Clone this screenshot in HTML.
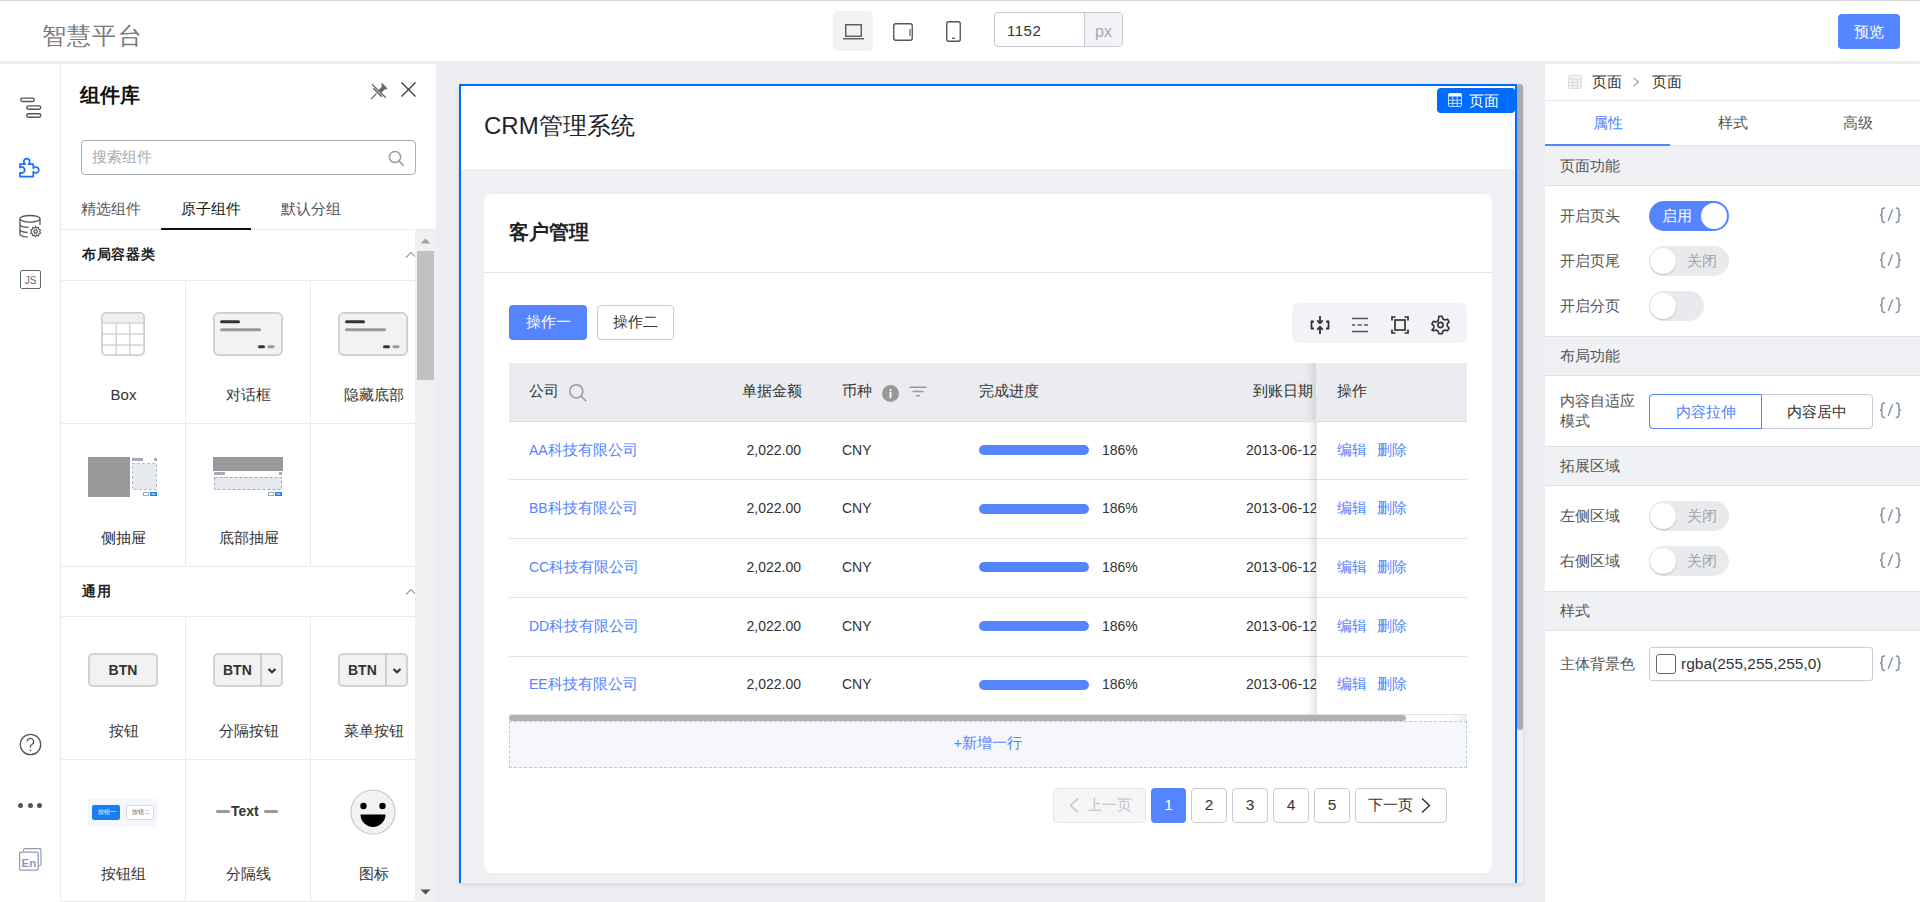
<!DOCTYPE html>
<html><head><meta charset="utf-8">
<style>
*{box-sizing:border-box;margin:0;padding:0}
html,body{width:1920px;height:902px;overflow:hidden;background:#fff;font-family:"Liberation Sans",sans-serif;font-size:15px;color:#333}
.a{position:absolute}
.l{font-size:14px}
svg{display:block}
#top{left:0;top:0;width:1920px;height:61px;background:#fff;border-top:1px solid #d8d9dc}
#strip{left:0;top:61px;width:1920px;height:3px;background:#eceef2}
#rail{left:0;top:64px;width:61px;height:838px;background:#fff;border-right:1px solid #e9eaef}
#panel{left:61px;top:64px;width:375px;height:838px;background:#fff}
#canvas{left:436px;top:64px;width:1109px;height:838px;background:#eceef2}
#right{left:1545px;top:64px;width:375px;height:838px;background:#fff}
</style></head><body>
<div id="top" class="a">
 <div class="a" style="left:42px;top:19px;font-size:24px;line-height:32px;color:#7a7a7a;letter-spacing:1.2px">智慧平台</div>
 <div class="a" style="left:833px;top:10px;width:40px;height:40px;border-radius:5px;background:#f2f2f2"></div>
 <svg class="a" style="left:840px;top:17px" width="26" height="26" viewBox="0 0 26 26"><rect x="5.75" y="6.75" width="15.5" height="11.5" fill="none" stroke="#555" stroke-width="1.35"/><line x1="3" y1="20.75" x2="24" y2="20.75" stroke="#555" stroke-width="1.35"/></svg>
 <svg class="a" style="left:890px;top:17px" width="26" height="26" viewBox="0 0 26 26"><rect x="3.75" y="5.75" width="18.5" height="16.5" rx="2" fill="none" stroke="#555" stroke-width="1.35"/><line x1="20" y1="11" x2="20" y2="18" stroke="#555" stroke-width="1.1"/></svg>
 <svg class="a" style="left:940px;top:17px" width="26" height="26" viewBox="0 0 26 26"><rect x="6.75" y="3.75" width="13.5" height="19.5" rx="2" fill="none" stroke="#555" stroke-width="1.35"/><line x1="12" y1="20.25" x2="15" y2="20.25" stroke="#555" stroke-width="1.35"/></svg>
 <div class="a" style="left:994px;top:11px;width:129px;height:35px;border:1px solid #c5c8d2;border-radius:4px;overflow:hidden">
  <div class="a l" style="left:12px;top:1px;line-height:33px;font-size:15px;color:#333;letter-spacing:0.5px">1152</div>
  <div class="a" style="left:89px;top:0;width:38px;height:33px;border-left:1px solid #c5c8d2;background:#f2f3f7;text-align:center;line-height:38px;font-size:16px;color:#a5a8b0">px</div>
 </div>
 <div class="a" style="left:1838px;top:13px;width:62px;height:35px;border-radius:4px;background:#5585ff;color:#fff;text-align:center;line-height:35px;font-size:15px">预览</div>
</div>

<div id="strip" class="a"></div>
<div id="rail" class="a">
 <svg class="a" style="left:18px;top:30px" width="26" height="26" viewBox="0 0 26 26" fill="none" stroke="#555" stroke-width="1.4"><rect x="2.7" y="4.1" width="13.6" height="3.4" rx="1.7"/><rect x="8.7" y="11.9" width="14" height="3.4" rx="1.7"/><rect x="8.7" y="19.8" width="14" height="3.4" rx="1.7"/></svg>
 <svg class="a" style="left:17px;top:92px" width="26" height="26" viewBox="0 0 26 26" fill="none" stroke="#1a6dff" stroke-width="1.7" stroke-linejoin="round"><path d="M3 8.1H8.14A3 3 0 1 1 11.46 8.1H16.3V12.34A3 3 0 1 1 16.3 15.66V20.6H3V16.5A3 3 0 1 0 3 11.5Z"/></svg>
 <svg class="a" style="left:17px;top:149px" width="26" height="26" viewBox="0 0 26 26" fill="none" stroke="#555" stroke-width="1.3"><ellipse cx="13" cy="5.8" rx="10" ry="3.3"/><path d="M3 5.8v15.2c0 1.5 3.2 2.8 7.8 3.2M3 11.2c0 1.6 3.6 3 8.6 3.2M3 16.4c0 1.5 3.1 2.8 7.6 3.1M23 5.8v6"/><circle cx="18.6" cy="18.6" r="1.7"/><path d="M18.6 13.4l1 1.6 1.8-.5.4 1.8 1.7.7-.9 1.6.9 1.6-1.7.7-.4 1.8-1.8-.5-1 1.6-1-1.6-1.8.5-.4-1.8-1.7-.7.9-1.6-.9-1.6 1.7-.7.4-1.8 1.8.5z" stroke-width="1.1"/></svg>
 <div class="a" style="left:20px;top:206px;width:21px;height:19px;border:1.6px solid #666;border-radius:2px;font-size:10px;line-height:19px;text-align:center;color:#666">JS</div>
 <svg class="a" style="left:18px;top:668px" width="25" height="25" viewBox="0 0 25 25" fill="none" stroke="#555" stroke-width="1.3"><circle cx="12.5" cy="12.5" r="10.2"/><path d="M9.3 9.6a3.2 3.2 0 1 1 4.6 2.9c-.9.5-1.4 1.1-1.4 2.1v1.2"/><circle cx="12.5" cy="18.3" r=".9" fill="#555" stroke="none"/></svg>
 <div class="a" style="left:18px;top:739px;width:5px;height:5px;border-radius:50%;background:#555"></div>
 <div class="a" style="left:27.5px;top:739px;width:5px;height:5px;border-radius:50%;background:#555"></div>
 <div class="a" style="left:37px;top:739px;width:5px;height:5px;border-radius:50%;background:#555"></div>
 <svg class="a" style="left:18px;top:783px" width="25" height="25" viewBox="0 0 25 25" fill="none" stroke="#8f9bb3" stroke-width="1.2"><path d="M5.5 4.2V3.2a1.5 1.5 0 0 1 1.5-1.5h14.5a1.5 1.5 0 0 1 1.5 1.5v14a1.5 1.5 0 0 1-1.5 1.5h-.8"/><rect x="1.6" y="5.2" width="18.6" height="18" rx="1.5"/><text x="3.6" y="19.6" font-size="11.5" font-weight="bold" font-family="Liberation Sans" fill="#8f9bb3" stroke="none">En</text></svg>
</div>

<div id="panel" class="a">
 <div class="a" style="left:19px;top:16px;font-size:20px;font-weight:bold;line-height:30px;color:#111">组件库</div>
 <svg class="a" style="left:308px;top:17px" width="20" height="20" viewBox="0 0 20 20"><path d="M3 3.2L16.8 16.8" stroke="#666" stroke-width="1.3"/><path d="M4.3 7.2L12.8 15.7" stroke="#666" stroke-width="1.6"/><path d="M12.6 1.6l5.7 5.7-1.5 1.4-1-.5-3 3 .2 1.2-4.2-4.2 1.2.2 3-3-.5-1z" fill="#666"/><path d="M2 18L7.5 12.5" stroke="#666" stroke-width="1.1"/></svg>
 <svg class="a" style="left:339px;top:17px" width="17" height="17" viewBox="0 0 17 17"><path d="M1.5 1.5l14 14M15.5 1.5l-14 14" stroke="#333" stroke-width="1.15"/></svg>
 <div class="a" style="left:20px;top:76px;width:335px;height:35px;border:1px solid #a9acb6;border-radius:4px"></div>
 <div class="a" style="left:31px;top:82px;line-height:22px;color:#a8abb3">搜索组件</div>
 <svg class="a" style="left:327px;top:86px" width="17" height="17" viewBox="0 0 17 17" fill="none" stroke="#999" stroke-width="1.5"><circle cx="7" cy="7" r="5.6"/><path d="M11 11l4.6 4.6"/></svg>
 <div class="a" style="left:0;top:165px;width:375px;height:1px;background:#ebebeb"></div>
 <div class="a" style="left:20px;top:134px;line-height:22px;color:#555">精选组件</div>
 <div class="a" style="left:120px;top:134px;line-height:22px;color:#111">原子组件</div>
 <div class="a" style="left:220px;top:134px;line-height:22px;color:#555">默认分组</div>
 <div class="a" style="left:100px;top:164px;width:90px;height:2px;background:#111"></div>
 <div class="a" style="left:0;top:166px;width:354px;height:672px;overflow:hidden">
  <div class="a" style="left:0;top:0px;width:375px;height:51px;border-bottom:1px solid #ebebeb"></div>
  <div class="a" style="left:21px;top:13px;font-size:14px;font-weight:bold;line-height:22px;color:#222;letter-spacing:0.7px">布局容器类</div>
  <svg class="a" style="left:344px;top:21px" width="12" height="8" viewBox="0 0 12 8"><path d="M1 6.5L6 1.5l5 5" fill="none" stroke="#999" stroke-width="1.1"/></svg><div class="a" style="left:0px;top:51px;width:125px;height:143px;border-right:1px solid #ebebeb;border-bottom:1px solid #ebebeb">
  <div class="a" style="left:0;top:0;width:124px;height:105px;display:flex;align-items:center;justify-content:center"><svg width="44" height="44" viewBox="0 0 44 44"><path d="M1 5a4 4 0 0 1 4-4h34a4 4 0 0 1 4 4v6H1z" fill="#f0f0f0"/><rect x="0.9" y="0.9" width="42.2" height="42.2" rx="4" fill="none" stroke="#d0d0d0" stroke-width="1.8"/><path d="M1 11h42M1 22h42M1 33h42M15.3 11v32M28.7 11v32" stroke="#d3d3d3" stroke-width="1.5"/></svg></div>
  <div class="a" style="left:0;top:103px;width:125px;text-align:center;line-height:22px">Box</div></div><div class="a" style="left:125px;top:51px;width:125px;height:143px;border-right:1px solid #ebebeb;border-bottom:1px solid #ebebeb">
  <div class="a" style="left:0;top:0;width:124px;height:105px;display:flex;align-items:center;justify-content:center"><svg width="70" height="44" viewBox="0 0 70 44"><rect x="0.9" y="0.9" width="68.2" height="42.2" rx="5" fill="#f2f2f2" stroke="#cdcdcd" stroke-width="1.8"/><rect x="7" y="8.2" width="20" height="3" rx="1.5" fill="#333"/><rect x="7" y="16.2" width="41" height="3" rx="1.5" fill="#999"/><rect x="45" y="33.2" width="7" height="3" rx="1.5" fill="#333"/><rect x="54.5" y="33.2" width="7" height="3" rx="1.5" fill="#999"/></svg></div>
  <div class="a" style="left:0;top:103px;width:125px;text-align:center;line-height:22px">对话框</div></div><div class="a" style="left:250px;top:51px;width:125px;height:143px;border-right:1px solid #ebebeb;border-bottom:1px solid #ebebeb">
  <div class="a" style="left:0;top:0;width:124px;height:105px;display:flex;align-items:center;justify-content:center"><svg width="70" height="44" viewBox="0 0 70 44"><rect x="0.9" y="0.9" width="68.2" height="42.2" rx="5" fill="#f2f2f2" stroke="#cdcdcd" stroke-width="1.8"/><rect x="7" y="8.2" width="20" height="3" rx="1.5" fill="#333"/><rect x="7" y="16.2" width="41" height="3" rx="1.5" fill="#999"/><rect x="45" y="33.2" width="7" height="3" rx="1.5" fill="#333"/><rect x="54.5" y="33.2" width="7" height="3" rx="1.5" fill="#999"/></svg></div>
  <div class="a" style="left:0;top:103px;width:125px;text-align:center;line-height:22px">隐藏底部</div></div><div class="a" style="left:0px;top:194px;width:125px;height:143px;border-right:1px solid #ebebeb;border-bottom:1px solid #ebebeb">
  <div class="a" style="left:0;top:0;width:124px;height:105px;display:flex;align-items:center;justify-content:center"><svg width="70" height="40" viewBox="0 0 70 40"><rect x="0" y="0" width="42" height="40" fill="#999"/><rect x="44" y="1" width="11" height="3" fill="#a3acba"/><rect x="66" y="1" width="3" height="3" fill="#a3acba"/><rect x="44.5" y="6.5" width="24" height="26" fill="#e6e9ee" stroke="#9ea8b8" stroke-dasharray="2 3"/><rect x="55.5" y="35.5" width="5" height="3" fill="none" stroke="#a3acba"/><rect x="62" y="35" width="7" height="4" fill="#1a7ef0"/><rect x="63.5" y="36.5" width="4" height="1" fill="#fff"/></svg></div>
  <div class="a" style="left:0;top:103px;width:125px;text-align:center;line-height:22px">侧抽屉</div></div><div class="a" style="left:125px;top:194px;width:125px;height:143px;border-right:1px solid #ebebeb;border-bottom:1px solid #ebebeb">
  <div class="a" style="left:0;top:0;width:124px;height:105px;display:flex;align-items:center;justify-content:center"><svg width="70" height="40" viewBox="0 0 70 40"><rect x="0" y="0" width="70" height="14" fill="#999"/><rect x="1" y="15" width="11" height="3" fill="#a3acba"/><rect x="66" y="15" width="3" height="3" fill="#a3acba"/><rect x="1.5" y="20.5" width="67" height="12" fill="#e6e9ee" stroke="#9ea8b8" stroke-dasharray="3 2"/><rect x="55.5" y="35.5" width="5" height="3" fill="none" stroke="#a3acba"/><rect x="62" y="35" width="7" height="4" fill="#1a7ef0"/><rect x="63.5" y="36.5" width="4" height="1" fill="#fff"/></svg></div>
  <div class="a" style="left:0;top:103px;width:125px;text-align:center;line-height:22px">底部抽屉</div></div><div class="a" style="left:250px;top:194px;width:125px;height:143px;border-right:1px solid #ebebeb;border-bottom:1px solid #ebebeb">
  <div class="a" style="left:0;top:0;width:124px;height:105px;display:flex;align-items:center;justify-content:center"></div>
  </div><div class="a" style="left:0;top:337px;width:375px;height:50px;border-bottom:1px solid #ebebeb"></div>
  <div class="a" style="left:21px;top:350px;font-size:14px;font-weight:bold;line-height:22px;color:#222;letter-spacing:0.7px">通用</div>
  <svg class="a" style="left:344px;top:358px" width="12" height="8" viewBox="0 0 12 8"><path d="M1 6.5L6 1.5l5 5" fill="none" stroke="#999" stroke-width="1.1"/></svg><div class="a" style="left:0px;top:387px;width:125px;height:143px;border-right:1px solid #ebebeb;border-bottom:1px solid #ebebeb">
  <div class="a" style="left:0;top:0;width:124px;height:105px;display:flex;align-items:center;justify-content:center"><div style="width:70px;height:34px;border:2px solid #d2d2d2;border-radius:5px;background:#f2f2f2;font-weight:bold;font-size:14px;line-height:30px;text-align:center;color:#333">BTN</div></div>
  <div class="a" style="left:0;top:103px;width:125px;text-align:center;line-height:22px">按钮</div></div><div class="a" style="left:125px;top:387px;width:125px;height:143px;border-right:1px solid #ebebeb;border-bottom:1px solid #ebebeb">
  <div class="a" style="left:0;top:0;width:124px;height:105px;display:flex;align-items:center;justify-content:center"><div style="position:relative;width:70px;height:34px;border:2px solid #d2d2d2;border-radius:5px;background:#f2f2f2;font-weight:bold;font-size:14px;line-height:30px;color:#333"><span style="position:absolute;left:8px;top:0">BTN</span><div style="position:absolute;left:45px;top:-2px;width:2px;height:34px;background:#cdcdcd"></div><svg style="position:absolute;left:52px;top:12px" width="10" height="8" viewBox="0 0 10 8"><path d="M1.5 2l3.5 3.2L8.5 2" fill="none" stroke="#333" stroke-width="2.2"/></svg></div></div>
  <div class="a" style="left:0;top:103px;width:125px;text-align:center;line-height:22px">分隔按钮</div></div><div class="a" style="left:250px;top:387px;width:125px;height:143px;border-right:1px solid #ebebeb;border-bottom:1px solid #ebebeb">
  <div class="a" style="left:0;top:0;width:124px;height:105px;display:flex;align-items:center;justify-content:center"><div style="position:relative;width:70px;height:34px;border:2px solid #d2d2d2;border-radius:5px;background:#f2f2f2;font-weight:bold;font-size:14px;line-height:30px;color:#333"><span style="position:absolute;left:8px;top:0">BTN</span><div style="position:absolute;left:45px;top:-2px;width:2px;height:34px;background:#cdcdcd"></div><svg style="position:absolute;left:52px;top:12px" width="10" height="8" viewBox="0 0 10 8"><path d="M1.5 2l3.5 3.2L8.5 2" fill="none" stroke="#333" stroke-width="2.2"/></svg></div></div>
  <div class="a" style="left:0;top:103px;width:125px;text-align:center;line-height:22px">菜单按钮</div></div><div class="a" style="left:0px;top:530px;width:125px;height:142px;border-right:1px solid #ebebeb;border-bottom:1px solid #ebebeb">
  <div class="a" style="left:0;top:0;width:124px;height:105px;display:flex;align-items:center;justify-content:center"><div style="position:relative;width:70px;height:28px;background:#f4f7fc"><div style="position:absolute;left:4px;top:6px;width:28px;height:15px;border-radius:2px;background:#1a7ef0;color:#fff;font-size:6px;line-height:15px;padding-left:6px;overflow:hidden;white-space:nowrap">按钮一</div><div style="position:absolute;left:38px;top:6px;width:28px;height:15px;border-radius:2px;border:1px solid #d5d8de;background:#fff;color:#555;font-size:6px;line-height:13px;padding-left:5px;overflow:hidden;white-space:nowrap">按钮二</div></div></div>
  <div class="a" style="left:0;top:103px;width:125px;text-align:center;line-height:22px">按钮组</div></div><div class="a" style="left:125px;top:530px;width:125px;height:142px;border-right:1px solid #ebebeb;border-bottom:1px solid #ebebeb">
  <div class="a" style="left:0;top:0;width:124px;height:105px;display:flex;align-items:center;justify-content:center"><div style="position:relative;width:64px;height:20px;margin-top:-4px"><div style="position:absolute;left:0;top:9px;width:14px;height:3px;border-radius:1.5px;background:#999"></div><div style="position:absolute;left:15px;top:0;font-weight:bold;font-size:14px;line-height:20px;color:#333">Text</div><div style="position:absolute;left:48px;top:9px;width:14px;height:3px;border-radius:1.5px;background:#999"></div></div></div>
  <div class="a" style="left:0;top:103px;width:125px;text-align:center;line-height:22px">分隔线</div></div><div class="a" style="left:250px;top:530px;width:125px;height:142px;border-right:1px solid #ebebeb;border-bottom:1px solid #ebebeb">
  <div class="a" style="left:0;top:0;width:124px;height:105px;display:flex;align-items:center;justify-content:center"><svg width="46" height="46" viewBox="0 0 46 46" style="margin-top:-2px"><circle cx="23" cy="23" r="22" fill="#f2f2f2" stroke="#c8c8c8" stroke-width="1.2"/><circle cx="13.5" cy="17" r="3.2" fill="#000"/><circle cx="32.5" cy="17" r="3.2" fill="#000"/><path d="M10.5 25.5h25a12.5 12.5 0 0 1-25 0z" fill="#000"/></svg></div>
  <div class="a" style="left:0;top:103px;width:125px;text-align:center;line-height:22px">图标</div></div>
 </div>
 <div class="a" style="left:354px;top:166px;width:21px;height:672px;background:#f0f0f0"></div>
 <div class="a" style="left:356px;top:187px;width:17px;height:129px;background:#c1c1c1"></div>
 <svg class="a" style="left:359px;top:174px" width="11" height="6" viewBox="0 0 11 6"><path d="M0.5 5.5L5.5 0.5l5 5z" fill="#a3a3a3"/></svg>
 <svg class="a" style="left:359px;top:825px" width="11" height="6" viewBox="0 0 11 6"><path d="M0.5 0.5h10l-5 5z" fill="#505050"/></svg>
</div>
<div id="canvas" class="a"></div>
<div class="a" style="left:459px;top:84px;width:1064px;height:799px;background:#eff0f4;box-shadow:0 2px 5px rgba(0,0,0,0.10)"></div>
<div class="a" style="left:461px;top:86px;width:1054px;height:83px;background:#fff"></div>
<div class="a" style="left:459px;top:84px;width:1058px;height:2px;background:#006bff"></div>
<div class="a" style="left:459px;top:84px;width:2px;height:799px;background:#006bff"></div>
<div class="a" style="left:1515px;top:84px;width:2px;height:799px;background:#006bff"></div>
<div class="a" style="left:1517px;top:84px;width:6px;height:646px;border-radius:3px;background:#a9aaae"></div>
<div class="a" style="left:1437px;top:88px;width:78px;height:25px;border-radius:4px 3px 4px 4px;background:#006bff"></div>
 <svg class="a" style="left:1448px;top:93px" width="14" height="14" viewBox="0 0 14 14"><rect x="0.5" y="0.5" width="13" height="13" rx="1.5" fill="none" stroke="#fff" stroke-opacity="0.75"/><rect x="0.5" y="0.5" width="13" height="3" fill="#fff"/><path d="M0.5 7.2h13M0.5 10.4h13M4.8 3.5v10M9.2 3.5v10" stroke="#fff" stroke-opacity="0.75"/></svg>
 <div class="a" style="left:1469px;top:91px;line-height:20px;color:#fff">页面</div>
<div class="a" style="left:484px;top:111px;font-size:24px;line-height:30px;color:#1f2329">CRM管理系统</div>
<div class="a" style="left:484px;top:194px;width:1008px;height:679px;border-radius:8px;background:#fff"></div>
<div class="a" style="left:509px;top:217px;font-size:20px;font-weight:bold;line-height:30px;color:#222">客户管理</div>
<div class="a" style="left:484px;top:272px;width:1008px;height:1px;background:#e5e6eb"></div>
<div class="a" style="left:509px;top:305px;width:78px;height:35px;border-radius:4px;background:#5584ff;color:#fff;text-align:center;line-height:33px">操作一</div>
<div class="a" style="left:597px;top:305px;width:77px;height:35px;border-radius:4px;border:1px solid #c9ccd6;background:#fff;color:#333;text-align:center;line-height:31px">操作二</div>
<div class="a" style="left:1292px;top:303px;width:175px;height:40px;border-radius:6px;background:#f2f3f7"></div>
 <svg class="a" style="left:1310px;top:315px" width="20" height="20" viewBox="0 0 20 20" fill="none" stroke="#333" stroke-width="1.8"><path d="M4 6.5H1.5v7H4M16 6.5h2.5v7H16M10 1v7M7.2 5.4L10 8.2l2.8-2.8M10 19v-7M7.2 14.6L10 11.8l2.8 2.8"/></svg>
 <svg class="a" style="left:1351px;top:316px" width="18" height="18" viewBox="0 0 18 18" fill="none" stroke="#555" stroke-width="1.7"><path d="M1 2.5h16M1 15.5h16M1 9h3.2M6.6 9h4.2M13 9h4"/></svg>
 <svg class="a" style="left:1391px;top:316px" width="18" height="18" viewBox="0 0 18 18" fill="none" stroke="#333" stroke-width="1.7"><path d="M1 4.5V1h3.5M13.5 1H17v3.5M17 13.5V17h-3.5M4.5 17H1v-3.5"/><rect x="4" y="4" width="10" height="10"/></svg>
 <svg class="a" style="left:1431px;top:315px" width="19" height="20" viewBox="0 0 19 20" fill="none" stroke="#333" stroke-width="1.6"><circle cx="9.5" cy="10" r="2.6"/><path d="M7.9 1.2h3.2l.7 2.6 2.1 1.2 2.6-.8 1.6 2.8-1.9 1.9v2.2l1.9 1.9-1.6 2.8-2.6-.8-2.1 1.2-.7 2.6H7.9l-.7-2.6-2.1-1.2-2.6.8L.9 15l1.9-1.9v-2.2L.9 9 2.5 6.2l2.6.8 2.1-1.2z" stroke-linejoin="round"/></svg>
<div class="a" style="left:509px;top:363px;width:958px;height:58px;background:#ebecf0"></div>
<div class="a" style="left:509px;top:421px;width:958px;height:1px;background:#dcdee3"></div>
<div class="a" style="left:529px;top:381px;line-height:20px;color:#333">公司</div>
<svg class="a" style="left:568px;top:383px" width="20" height="20" viewBox="0 0 20 20" fill="none" stroke="#999" stroke-width="1.5"><circle cx="8.3" cy="8.3" r="6.6"/><path d="M13 13l5.2 5.2"/></svg>
<div class="a" style="left:742px;top:381px;line-height:20px;color:#333">单据金额</div>
<div class="a" style="left:842px;top:381px;line-height:20px;color:#333">币种</div>
<svg class="a" style="left:882px;top:385px" width="17" height="17" viewBox="0 0 17 17"><circle cx="8.5" cy="8.5" r="8.5" fill="#999"/><circle cx="8.5" cy="5" r="1.1" fill="#fff"/><rect x="7.6" y="7" width="1.8" height="6" fill="#fff"/></svg>
<svg class="a" style="left:909px;top:386px" width="18" height="11" viewBox="0 0 18 11" fill="none" stroke="#999" stroke-width="1.5"><path d="M0.5 1.2h17M3.5 5.5h11M7 9.8h4"/></svg>
<div class="a" style="left:979px;top:381px;line-height:20px;color:#333">完成进度</div>
<div class="a" style="left:1253px;top:381px;line-height:20px;color:#333">到账日期</div>
<div class="a" style="left:529px;top:440px;line-height:20px;color:#5584ff"><span class="l">AA</span>科技有限公司</div>
<div class="a l" style="left:701px;top:440px;width:100px;text-align:right;line-height:20px;color:#333">2,022.00</div>
<div class="a l" style="left:842px;top:440px;line-height:20px;color:#333">CNY</div>
<div class="a" style="left:979px;top:445px;width:110px;height:10px;border-radius:5px;background:#5584ff"></div>
<div class="a l" style="left:1102px;top:440px;line-height:20px;color:#333">186%</div>
<div class="a l" style="left:1246px;top:440px;width:70px;overflow:hidden;white-space:nowrap;line-height:20px;color:#333">2013-06-12</div>
<div class="a" style="left:529px;top:498px;line-height:20px;color:#5584ff"><span class="l">BB</span>科技有限公司</div>
<div class="a l" style="left:701px;top:498px;width:100px;text-align:right;line-height:20px;color:#333">2,022.00</div>
<div class="a l" style="left:842px;top:498px;line-height:20px;color:#333">CNY</div>
<div class="a" style="left:979px;top:504px;width:110px;height:10px;border-radius:5px;background:#5584ff"></div>
<div class="a l" style="left:1102px;top:498px;line-height:20px;color:#333">186%</div>
<div class="a l" style="left:1246px;top:498px;width:70px;overflow:hidden;white-space:nowrap;line-height:20px;color:#333">2013-06-12</div>
<div class="a" style="left:529px;top:557px;line-height:20px;color:#5584ff"><span class="l">CC</span>科技有限公司</div>
<div class="a l" style="left:701px;top:557px;width:100px;text-align:right;line-height:20px;color:#333">2,022.00</div>
<div class="a l" style="left:842px;top:557px;line-height:20px;color:#333">CNY</div>
<div class="a" style="left:979px;top:562px;width:110px;height:10px;border-radius:5px;background:#5584ff"></div>
<div class="a l" style="left:1102px;top:557px;line-height:20px;color:#333">186%</div>
<div class="a l" style="left:1246px;top:557px;width:70px;overflow:hidden;white-space:nowrap;line-height:20px;color:#333">2013-06-12</div>
<div class="a" style="left:529px;top:616px;line-height:20px;color:#5584ff"><span class="l">DD</span>科技有限公司</div>
<div class="a l" style="left:701px;top:616px;width:100px;text-align:right;line-height:20px;color:#333">2,022.00</div>
<div class="a l" style="left:842px;top:616px;line-height:20px;color:#333">CNY</div>
<div class="a" style="left:979px;top:621px;width:110px;height:10px;border-radius:5px;background:#5584ff"></div>
<div class="a l" style="left:1102px;top:616px;line-height:20px;color:#333">186%</div>
<div class="a l" style="left:1246px;top:616px;width:70px;overflow:hidden;white-space:nowrap;line-height:20px;color:#333">2013-06-12</div>
<div class="a" style="left:529px;top:674px;line-height:20px;color:#5584ff"><span class="l">EE</span>科技有限公司</div>
<div class="a l" style="left:701px;top:674px;width:100px;text-align:right;line-height:20px;color:#333">2,022.00</div>
<div class="a l" style="left:842px;top:674px;line-height:20px;color:#333">CNY</div>
<div class="a" style="left:979px;top:680px;width:110px;height:10px;border-radius:5px;background:#5584ff"></div>
<div class="a l" style="left:1102px;top:674px;line-height:20px;color:#333">186%</div>
<div class="a l" style="left:1246px;top:674px;width:70px;overflow:hidden;white-space:nowrap;line-height:20px;color:#333">2013-06-12</div>
<div class="a" style="left:509px;top:479px;width:958px;height:1px;background:#e1e3e8"></div>
<div class="a" style="left:509px;top:538px;width:958px;height:1px;background:#e1e3e8"></div>
<div class="a" style="left:509px;top:597px;width:958px;height:1px;background:#e1e3e8"></div>
<div class="a" style="left:509px;top:656px;width:958px;height:1px;background:#e1e3e8"></div>
<div class="a" style="left:1302px;top:363px;width:14px;height:57px;background:linear-gradient(to right,rgba(0,0,0,0),rgba(0,0,0,0.02) 40%,rgba(0,0,0,0.09))"></div><div class="a" style="left:1303px;top:422px;width:14px;height:292px;background:linear-gradient(to right,rgba(0,0,0,0),rgba(0,0,0,0.02) 40%,rgba(0,0,0,0.11))"></div>
<div class="a" style="left:1316px;top:363px;width:151px;height:58px;background:#ebecf0"></div>
<div class="a" style="left:1317px;top:422px;width:150px;height:292px;background:#fff"></div>
<div class="a" style="left:1316px;top:479px;width:151px;height:1px;background:#e1e3e8"></div>
<div class="a" style="left:1316px;top:538px;width:151px;height:1px;background:#e1e3e8"></div>
<div class="a" style="left:1316px;top:597px;width:151px;height:1px;background:#e1e3e8"></div>
<div class="a" style="left:1316px;top:656px;width:151px;height:1px;background:#e1e3e8"></div>
<div class="a" style="left:1316px;top:421px;width:151px;height:1px;background:#dcdee3"></div>
<div class="a" style="left:1337px;top:381px;line-height:20px;color:#333">操作</div>
<div class="a" style="left:1337px;top:440px;line-height:20px;color:#5584ff">编辑</div>
<div class="a" style="left:1377px;top:440px;line-height:20px;color:#5584ff">删除</div>
<div class="a" style="left:1337px;top:498px;line-height:20px;color:#5584ff">编辑</div>
<div class="a" style="left:1377px;top:498px;line-height:20px;color:#5584ff">删除</div>
<div class="a" style="left:1337px;top:557px;line-height:20px;color:#5584ff">编辑</div>
<div class="a" style="left:1377px;top:557px;line-height:20px;color:#5584ff">删除</div>
<div class="a" style="left:1337px;top:616px;line-height:20px;color:#5584ff">编辑</div>
<div class="a" style="left:1377px;top:616px;line-height:20px;color:#5584ff">删除</div>
<div class="a" style="left:1337px;top:674px;line-height:20px;color:#5584ff">编辑</div>
<div class="a" style="left:1377px;top:674px;line-height:20px;color:#5584ff">删除</div>
<div class="a" style="left:509px;top:714px;width:958px;height:7px;background:linear-gradient(to right,#fff 0,#fff 942px,#ececec 958px);border-top:1px solid #dfe1e6"></div>
<div class="a" style="left:509px;top:715px;width:897px;height:6px;border-radius:3px;background:#b0b0b0"></div>
<div class="a" style="left:509px;top:721px;width:958px;height:47px;background:#f5f7fb;border:1px dashed #b9c9f5"></div>
<div class="a" style="left:509px;top:733px;width:958px;text-align:center;line-height:20px;color:#5584ff">+新增一行</div>
<div class="a" style="left:1053px;top:788px;width:93px;height:35px;border:1px solid #e3e5e9;border-radius:4px;background:#f5f6f8"></div>
 <svg class="a" style="left:1068px;top:797px" width="12" height="17" viewBox="0 0 12 17"><path d="M10 1.5L2.5 8.5l7.5 7" fill="none" stroke="#c4c4c4" stroke-width="1.5"/></svg>
 <div class="a" style="left:1087px;top:795px;line-height:20px;color:#c4c4c4">上一页</div>
<div class="a" style="left:1151px;top:788px;width:35px;height:35px;border-radius:4px;background:#5584ff;color:#fff;text-align:center;line-height:33px;font-size:15.5px">1</div>
<div class="a" style="left:1191px;top:788px;width:36px;height:35px;border-radius:4px;border:1px solid #c9ccd6;background:#fff;color:#333;text-align:center;line-height:31px;font-size:15.5px">2</div>
<div class="a" style="left:1232px;top:788px;width:36px;height:35px;border-radius:4px;border:1px solid #c9ccd6;background:#fff;color:#333;text-align:center;line-height:31px;font-size:15.5px">3</div>
<div class="a" style="left:1273px;top:788px;width:36px;height:35px;border-radius:4px;border:1px solid #c9ccd6;background:#fff;color:#333;text-align:center;line-height:31px;font-size:15.5px">4</div>
<div class="a" style="left:1314px;top:788px;width:36px;height:35px;border-radius:4px;border:1px solid #c9ccd6;background:#fff;color:#333;text-align:center;line-height:31px;font-size:15.5px">5</div>
<div class="a" style="left:1355px;top:788px;width:92px;height:35px;border:1px solid #c9ccd6;border-radius:4px;background:#fff"></div>
 <div class="a" style="left:1368px;top:795px;line-height:20px;color:#333">下一页</div>
 <svg class="a" style="left:1420px;top:797px" width="12" height="17" viewBox="0 0 12 17"><path d="M2 1.5l7.5 7L2 15.5" fill="none" stroke="#333" stroke-width="1.5"/></svg>
<div id="right" class="a"></div>
<svg class="a" style="left:1568px;top:75px" width="14" height="14" viewBox="0 0 14 14"><rect x="0.5" y="0.5" width="13" height="13" rx="1.5" fill="#f4f4f4" stroke="#ddd"/><path d="M0.5 4h13M0.5 7.3h13M0.5 10.6h13M4.8 4v9.5M9.2 4v9.5" stroke="#ddd"/></svg>
 <div class="a" style="left:1592px;top:72px;line-height:20px;color:#333">页面</div>
 <svg class="a" style="left:1632px;top:77px" width="8" height="10" viewBox="0 0 8 10"><path d="M1.5 0.8l5 4.2-5 4.2" fill="none" stroke="#999" stroke-width="1.1"/></svg>
 <div class="a" style="left:1652px;top:72px;line-height:20px;color:#333">页面</div>
 <div class="a" style="left:1545px;top:100px;width:375px;height:1px;background:#e8e9ed"></div>
<div class="a" style="left:1593px;top:113px;line-height:20px;color:#5584ff">属性</div>
 <div class="a" style="left:1718px;top:113px;line-height:20px;color:#555">样式</div>
 <div class="a" style="left:1843px;top:113px;line-height:20px;color:#555">高级</div>
 <div class="a" style="left:1545px;top:145px;width:375px;height:1px;background:#e3e5ea"></div>
 <div class="a" style="left:1545px;top:144px;width:125px;height:2px;background:#5584ff"></div>
<div class="a" style="left:1545px;top:146px;width:375px;height:40px;background:#f0f1f4;border-bottom:1px solid #dfe1e6"></div>
 <div class="a" style="left:1560px;top:156px;line-height:20px;color:#555">页面功能</div>
<div class="a" style="left:1560px;top:206px;line-height:20px;color:#555">开启页头</div><div class="a" style="left:1649px;top:201px;width:80px;height:30px;border-radius:15px;background:#5584ff"></div>
 <div class="a" style="left:1662px;top:206px;line-height:20px;color:#fff">启用</div>
 <div class="a" style="left:1701px;top:203px;width:26px;height:26px;border-radius:50%;background:#fff"></div><svg class="a" style="left:1879px;top:207px" width="23" height="17" viewBox="0 0 23 17" fill="none" stroke="#8793a8" stroke-width="1.5" stroke-linecap="round"><path d="M5.6 1C3.6 1 2.9 2 2.9 3.7V6.3C2.9 7.5 2.3 8.2 1 8.2C2.3 8.2 2.9 8.9 2.9 10.1V12.8C2.9 14.5 3.6 15.5 5.6 15.5M9.4 13.2L13.4 3M17.2 1C19.2 1 19.9 2 19.9 3.7V6.3C19.9 7.5 20.5 8.2 21.8 8.2C20.5 8.2 19.9 8.9 19.9 10.1V12.8C19.9 14.5 19.2 15.5 17.2 15.5"/></svg>
<div class="a" style="left:1560px;top:251px;line-height:20px;color:#555">开启页尾</div><div class="a" style="left:1649px;top:246px;width:80px;height:30px;border-radius:15px;background:#e9eaee"></div>
 <div class="a" style="left:1687px;top:251px;line-height:20px;color:#a0a3aa">关闭</div>
 <div class="a" style="left:1650px;top:248px;width:26px;height:26px;border-radius:50%;background:#fff;box-shadow:0 1px 2px rgba(0,0,0,0.18)"></div><svg class="a" style="left:1879px;top:252px" width="23" height="17" viewBox="0 0 23 17" fill="none" stroke="#8793a8" stroke-width="1.5" stroke-linecap="round"><path d="M5.6 1C3.6 1 2.9 2 2.9 3.7V6.3C2.9 7.5 2.3 8.2 1 8.2C2.3 8.2 2.9 8.9 2.9 10.1V12.8C2.9 14.5 3.6 15.5 5.6 15.5M9.4 13.2L13.4 3M17.2 1C19.2 1 19.9 2 19.9 3.7V6.3C19.9 7.5 20.5 8.2 21.8 8.2C20.5 8.2 19.9 8.9 19.9 10.1V12.8C19.9 14.5 19.2 15.5 17.2 15.5"/></svg>
<div class="a" style="left:1560px;top:296px;line-height:20px;color:#555">开启分页</div><div class="a" style="left:1649px;top:291px;width:55px;height:30px;border-radius:15px;background:#e9eaee"></div>
 
 <div class="a" style="left:1650px;top:293px;width:26px;height:26px;border-radius:50%;background:#fff;box-shadow:0 1px 2px rgba(0,0,0,0.18)"></div><svg class="a" style="left:1879px;top:297px" width="23" height="17" viewBox="0 0 23 17" fill="none" stroke="#8793a8" stroke-width="1.5" stroke-linecap="round"><path d="M5.6 1C3.6 1 2.9 2 2.9 3.7V6.3C2.9 7.5 2.3 8.2 1 8.2C2.3 8.2 2.9 8.9 2.9 10.1V12.8C2.9 14.5 3.6 15.5 5.6 15.5M9.4 13.2L13.4 3M17.2 1C19.2 1 19.9 2 19.9 3.7V6.3C19.9 7.5 20.5 8.2 21.8 8.2C20.5 8.2 19.9 8.9 19.9 10.1V12.8C19.9 14.5 19.2 15.5 17.2 15.5"/></svg>
<div class="a" style="left:1545px;top:336px;width:375px;height:40px;background:#f0f1f4;border-top:1px solid #dfe1e6;border-bottom:1px solid #dfe1e6"></div>
 <div class="a" style="left:1560px;top:346px;line-height:20px;color:#555">布局功能</div>
<div class="a" style="left:1560px;top:391px;width:80px;line-height:20px;color:#555">内容自适应模式</div>
 <div class="a" style="left:1649px;top:394px;width:224px;height:35px;border:1px solid #c9ccd6;border-radius:4px"></div>
 <div class="a" style="left:1649px;top:394px;width:113px;height:35px;border:1px solid #5584ff;border-radius:4px 0 0 4px;color:#5584ff;text-align:center;line-height:33px">内容拉伸</div>
 <div class="a" style="left:1761px;top:394px;width:112px;height:35px;color:#333;text-align:center;line-height:35px">内容居中</div><svg class="a" style="left:1879px;top:402px" width="23" height="17" viewBox="0 0 23 17" fill="none" stroke="#8793a8" stroke-width="1.5" stroke-linecap="round"><path d="M5.6 1C3.6 1 2.9 2 2.9 3.7V6.3C2.9 7.5 2.3 8.2 1 8.2C2.3 8.2 2.9 8.9 2.9 10.1V12.8C2.9 14.5 3.6 15.5 5.6 15.5M9.4 13.2L13.4 3M17.2 1C19.2 1 19.9 2 19.9 3.7V6.3C19.9 7.5 20.5 8.2 21.8 8.2C20.5 8.2 19.9 8.9 19.9 10.1V12.8C19.9 14.5 19.2 15.5 17.2 15.5"/></svg>
<div class="a" style="left:1545px;top:446px;width:375px;height:40px;background:#f0f1f4;border-top:1px solid #dfe1e6;border-bottom:1px solid #dfe1e6"></div>
 <div class="a" style="left:1560px;top:456px;line-height:20px;color:#555">拓展区域</div>
<div class="a" style="left:1560px;top:506px;line-height:20px;color:#555">左侧区域</div><div class="a" style="left:1649px;top:501px;width:80px;height:30px;border-radius:15px;background:#e9eaee"></div>
 <div class="a" style="left:1687px;top:506px;line-height:20px;color:#a0a3aa">关闭</div>
 <div class="a" style="left:1650px;top:503px;width:26px;height:26px;border-radius:50%;background:#fff;box-shadow:0 1px 2px rgba(0,0,0,0.18)"></div><svg class="a" style="left:1879px;top:507px" width="23" height="17" viewBox="0 0 23 17" fill="none" stroke="#8793a8" stroke-width="1.5" stroke-linecap="round"><path d="M5.6 1C3.6 1 2.9 2 2.9 3.7V6.3C2.9 7.5 2.3 8.2 1 8.2C2.3 8.2 2.9 8.9 2.9 10.1V12.8C2.9 14.5 3.6 15.5 5.6 15.5M9.4 13.2L13.4 3M17.2 1C19.2 1 19.9 2 19.9 3.7V6.3C19.9 7.5 20.5 8.2 21.8 8.2C20.5 8.2 19.9 8.9 19.9 10.1V12.8C19.9 14.5 19.2 15.5 17.2 15.5"/></svg>
<div class="a" style="left:1560px;top:551px;line-height:20px;color:#555">右侧区域</div><div class="a" style="left:1649px;top:546px;width:80px;height:30px;border-radius:15px;background:#e9eaee"></div>
 <div class="a" style="left:1687px;top:551px;line-height:20px;color:#a0a3aa">关闭</div>
 <div class="a" style="left:1650px;top:548px;width:26px;height:26px;border-radius:50%;background:#fff;box-shadow:0 1px 2px rgba(0,0,0,0.18)"></div><svg class="a" style="left:1879px;top:552px" width="23" height="17" viewBox="0 0 23 17" fill="none" stroke="#8793a8" stroke-width="1.5" stroke-linecap="round"><path d="M5.6 1C3.6 1 2.9 2 2.9 3.7V6.3C2.9 7.5 2.3 8.2 1 8.2C2.3 8.2 2.9 8.9 2.9 10.1V12.8C2.9 14.5 3.6 15.5 5.6 15.5M9.4 13.2L13.4 3M17.2 1C19.2 1 19.9 2 19.9 3.7V6.3C19.9 7.5 20.5 8.2 21.8 8.2C20.5 8.2 19.9 8.9 19.9 10.1V12.8C19.9 14.5 19.2 15.5 17.2 15.5"/></svg>
<div class="a" style="left:1545px;top:591px;width:375px;height:40px;background:#f0f1f4;border-top:1px solid #dfe1e6;border-bottom:1px solid #dfe1e6"></div>
 <div class="a" style="left:1560px;top:601px;line-height:20px;color:#555">样式</div>
<div class="a" style="left:1560px;top:654px;line-height:20px;color:#555">主体背景色</div>
 <div class="a" style="left:1649px;top:647px;width:224px;height:34px;border:1px solid #c9ccd6;border-radius:3px"></div>
 <div class="a" style="left:1656px;top:654px;width:20px;height:20px;border:1px solid #666;border-radius:3px;background:#fff"></div>
 <div class="a" style="left:1681px;top:654px;line-height:20px;font-size:15.5px;color:#333">rgba(255,255,255,0)</div><svg class="a" style="left:1879px;top:655px" width="23" height="17" viewBox="0 0 23 17" fill="none" stroke="#8793a8" stroke-width="1.5" stroke-linecap="round"><path d="M5.6 1C3.6 1 2.9 2 2.9 3.7V6.3C2.9 7.5 2.3 8.2 1 8.2C2.3 8.2 2.9 8.9 2.9 10.1V12.8C2.9 14.5 3.6 15.5 5.6 15.5M9.4 13.2L13.4 3M17.2 1C19.2 1 19.9 2 19.9 3.7V6.3C19.9 7.5 20.5 8.2 21.8 8.2C20.5 8.2 19.9 8.9 19.9 10.1V12.8C19.9 14.5 19.2 15.5 17.2 15.5"/></svg>
</body></html>
